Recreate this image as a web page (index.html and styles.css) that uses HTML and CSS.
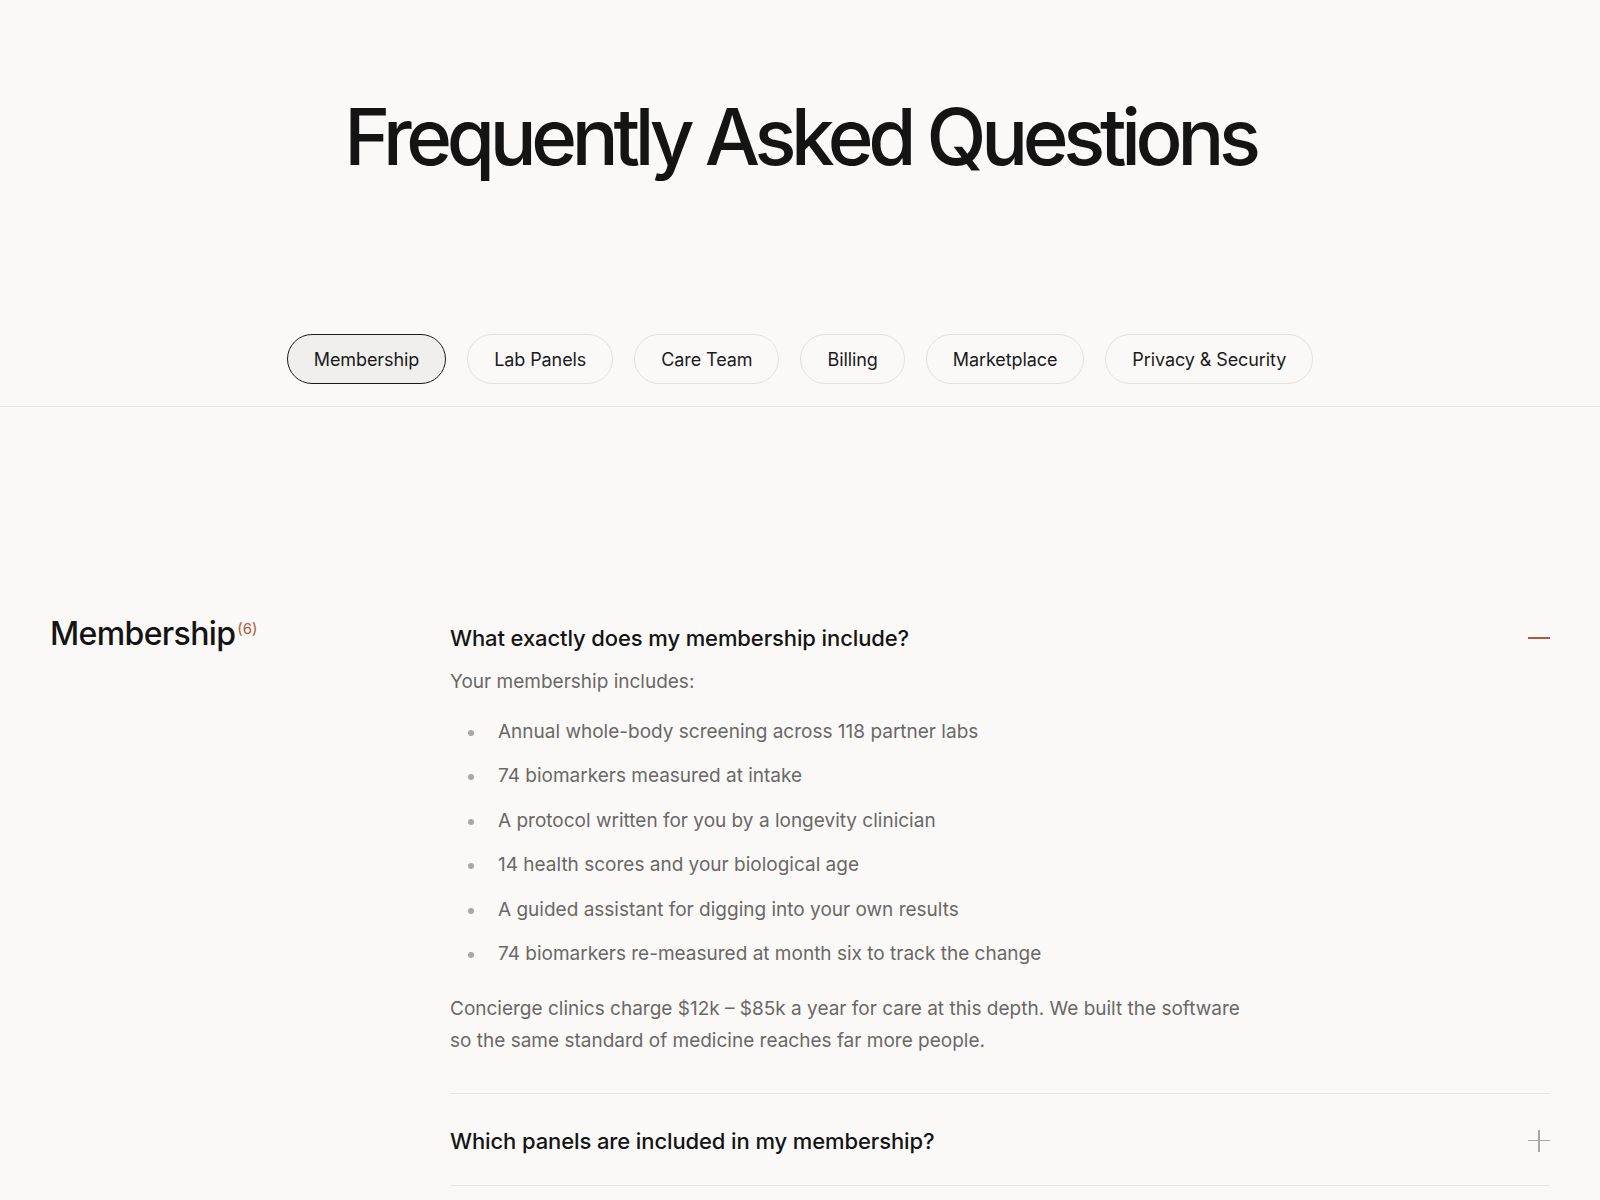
FILE: index.html
```html
<!DOCTYPE html>
<html lang="en">
<head>
<meta charset="utf-8">
<title>Frequently Asked Questions</title>
<link rel="stylesheet" href="styles.css">
</head>
<body>
<header class="hero">
  <h1 class="hero-title">Frequently Asked Questions</h1>
</header>
<nav class="tabs">
  <button class="tab tab-active">Membership</button>
  <button class="tab">Lab Panels</button>
  <button class="tab">Care Team</button>
  <button class="tab">Billing</button>
  <button class="tab">Marketplace</button>
  <button class="tab">Privacy &amp; Security</button>
</nav>
<main class="faq">
  <section class="faq-section">
    <h2 class="section-title">Membership<sup class="count">(6)</sup></h2>
    <div class="faq-list">
      <div class="faq-item open">
        <div class="faq-q">
          <span class="q-text">What exactly does my membership include?</span>
          <span class="icon icon-minus"></span>
        </div>
        <div class="faq-a">
          <p class="a-intro">Your membership includes:</p>
          <ul class="a-list">
            <li>Annual whole-body screening across 118 partner labs</li>
            <li>74 biomarkers measured at intake</li>
            <li>A protocol written for you by a longevity clinician</li>
            <li>14 health scores and your biological age</li>
            <li>A guided assistant for digging into your own results</li>
            <li>74 biomarkers re-measured at month six to track the change</li>
          </ul>
          <p class="a-para">Concierge clinics charge $12k – $85k a year for care at this depth. We built the software so the same standard of medicine reaches far more people.</p>
        </div>
      </div>
      <div class="faq-item">
        <div class="faq-q">
          <span class="q-text">Which panels are included in my membership?</span>
          <span class="icon icon-plus"></span>
        </div>
      </div>
    </div>
  </section>
</main>
</body>
</html>
```

FILE: styles.css
```css
* { box-sizing: border-box; }
html, body { margin: 0; padding: 0; }
body {
  background: #faf9f7;
  color: #141414;
  font-family: Inter, "Noto Sans", sans-serif;
}
.hero {
  display: flex;
  justify-content: center;
  padding-top: 98px;
  height: 334px;
}
.hero-title {
  margin: 0;
  font-size: 78px;
  font-weight: 500;
  letter-spacing: -0.068em;
  line-height: 1;
  color: #141414;
}
.tabs {
  display: flex;
  justify-content: center;
  gap: 21px;
  padding-bottom: 22px;
  border-bottom: 1px solid #e8e6e2;
}
.tab {
  height: 50px;
  padding: 0 26px;
  border: 1px solid #e3e1dd;
  border-radius: 25px;
  background: transparent;
  font-family: inherit;
  font-size: 18px;
  color: #1a1a1a;
  letter-spacing: -0.005em;
}
.tab-active {
  border-color: #1a1a1a;
  background: #f0efed;
}
.faq {
  padding: 208px 50px 0;
}
.faq-section {
  display: grid;
  grid-template-columns: 400px 1fr;
}
.section-title {
  margin: 3px 0 0;
  font-size: 32px;
  font-weight: 500;
  letter-spacing: -0.02em;
  line-height: 1;
  display: flex;
  align-items: flex-start;
  align-self: start;
}
.count {
  font-size: 15px;
  font-weight: 400;
  line-height: 1;
  color: #b5583a;
  letter-spacing: 0;
  margin-left: 2px;
  margin-top: 3px;
}
.faq-item {
  border-bottom: 1px solid #e8e6e2;
}
.faq-q {
  display: flex;
  justify-content: space-between;
  align-items: center;
  height: 30px;
  margin-top: 8px;
}
.faq-item + .faq-item .faq-q {
  margin-top: 32px;
  margin-bottom: 29px;
}
.q-text {
  font-size: 22px;
  font-weight: 500;
  letter-spacing: -0.005em;
}
.icon {
  position: relative;
  width: 22px;
  height: 22px;
}
.icon::before, .icon::after {
  content: "";
  position: absolute;
}
.icon-minus::before {
  left: 0; right: 0; top: 10px; height: 1.5px;
  background: #b5583a;
}
.icon-plus::before {
  left: 0; right: 0; top: 10px; height: 1.5px;
  background: #a9a7a4;
}
.icon-plus::after {
  top: 0; bottom: 0; left: 10px; width: 1.5px;
  background: #a9a7a4;
}
.faq-a {
  color: #6a6866;
  font-size: 19px;
  padding-bottom: 36px;
}
.a-intro {
  margin: 15px 0 0;
  line-height: 28px;
}
.a-list {
  list-style: none;
  margin: 22px 0 0;
  padding: 0;
}
.a-list li {
  position: relative;
  padding-left: 48px;
  line-height: 28px;
  margin-bottom: 16.4px;
}
.a-list li::before {
  content: "";
  position: absolute;
  left: 18px;
  top: 12px;
  width: 6px;
  height: 6px;
  border-radius: 50%;
  background: #a9a7a4;
}
.a-para {
  margin: 25px 0 0;
  max-width: 800px;
  line-height: 32px;
}
```
